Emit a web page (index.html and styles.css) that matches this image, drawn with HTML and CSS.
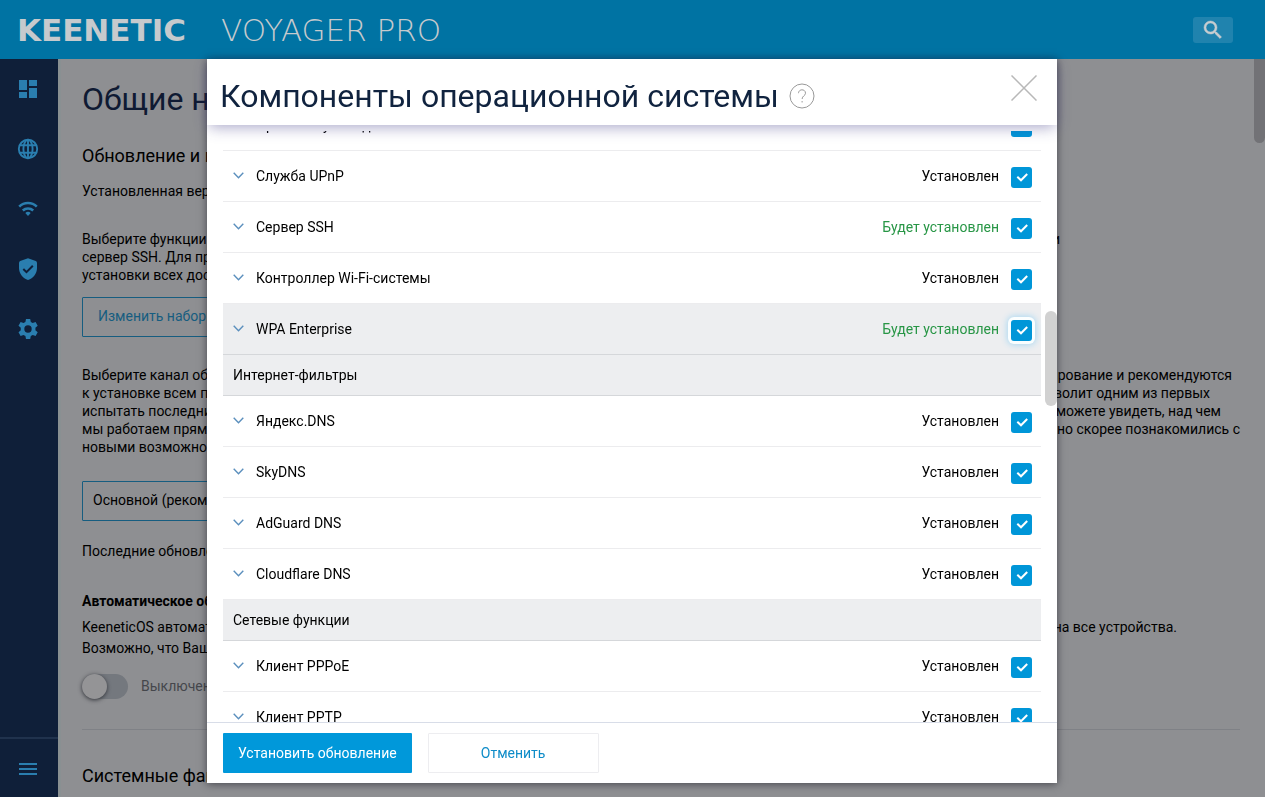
FILE: index.html
```html
<!DOCTYPE html>
<html lang="ru">
<head>
<meta charset="utf-8">
<meta name="viewport" content="width=device-width, initial-scale=1">
<title>Keenetic Voyager Pro</title>
<link rel="stylesheet" href="styles.css">
</head>
<body>
<div class="app">
  <header class="topbar">
    <a class="logo" href="#"><span class="logo-brand">KEENETIC</span><span class="logo-model">VOYAGER PRO</span></a>
    <button class="search" type="button" aria-label="Поиск">
      <svg width="24" height="24" viewBox="0 0 24 24"><path fill="currentColor" stroke="currentColor" stroke-width=".5" d="M15.500 14h-.79l-.28-.27A6.471 6.471 0 0 0 16 9.500 6.500 6.500 0 1 0 9.500 16c1.610 0 3.090-.59 4.230-1.570l.27.28v.79l5 4.990L20.490 19l-4.990-5zm-6 0C7.010 14 5 11.990 5 9.500S7.010 5 9.500 5 14 7.010 14 9.500 11.990 14 9.500 14z"/></svg>
    </button>
  </header>

  <nav class="sidebar">
    <a href="#" aria-label="Системный монитор"><svg width="24" height="24" viewBox="0 0 24 24"><path fill="currentColor" d="M3 13h8V3H3v10zm0 8h8v-6H3v6zm10 0h8V11h-8v10zm0-18v6h8V3h-8z"/></svg></a>
    <a href="#" aria-label="Интернет"><svg width="24" height="24" viewBox="0 0 24 24" fill="none" stroke="currentColor" stroke-width="1.900"><circle cx="12" cy="12" r="9.200"/><ellipse cx="12" cy="12" rx="4.600" ry="9.200"/><path d="M12 2.800v18.400M3.700 8.300h16.600M3.700 15.700h16.600"/></svg></a>
    <a href="#" aria-label="Мои сети и Wi-Fi"><svg width="24" height="24" viewBox="0 0 24 24"><g fill="none" stroke="currentColor" stroke-width="2.600"><path d="M3.200 9.600a12.700 12.700 0 0 1 17.600 0"/><path d="M6.800 13.500a7.700 7.700 0 0 1 10.400 0"/></g><path fill="currentColor" d="M9.300 16a4 4 0 0 1 5.400 0L12 18.900z"/></svg></a>
    <a href="#" aria-label="Сетевые правила"><svg width="24" height="24" viewBox="0 0 24 24"><path fill="currentColor" d="M12 1.200 4.200 4Q3 4.500 3 5.800V11c0 5.500 3.800 10.400 9 12 5.200-1.600 9-6.500 9-12V5.800Q21 4.500 19.800 4z"/><path d="m7.300 12 3.200 3.200 6.300-6.400" fill="none" stroke="#0f1f39" stroke-width="2"/></svg></a>
    <a href="#" aria-label="Управление"><svg width="24" height="24" viewBox="0 0 24 24"><path fill="currentColor" fill-rule="evenodd" d="M12 8.300a3.700 3.700 0 1 1 0 7.400 3.700 3.700 0 0 1 0-7.400m-2-6.300-.6 3-1.900 1.100-2.900-1-2.100 3.700 2.300 2a8 8 0 0 0 0 2.400l-2.300 2 2.100 3.700 2.900-1 1.900 1.100.6 3h4.200l.6-3 1.900-1.100 2.900 1 2.100-3.700-2.300-2a8 8 0 0 0 0-2.400l2.300-2-2.100-3.700-2.900 1-1.900-1.100-.6-3z"/></svg></a>
    <button class="menu" type="button" aria-label="Меню"><svg width="18" height="12" viewBox="0 0 18 12"><path fill="currentColor" d="M0 0h18v2H0zM0 5h18v2H0zM0 10h18v2H0z"/></svg></button>
  </nav>

  <main class="page">
    <h1>Общие настройки</h1>
    <h2>Обновление и компоненты</h2>
    <p class="version">Установленная версия</p>
    <div class="text intro">
      <p class="line end-narrow"><span>Выберите функции</span><span>и</span></p>
      <p class="line"><span>сервер SSH. Для применения</span></p>
      <p class="line"><span>установки всех доступных</span></p>
    </div>
    <button class="outline" type="button">Изменить набор компонентов</button>
    <div class="text channel">
      <p class="line end-s"><span>Выберите канал обновлений</span><span>тестирование и рекомендуются</span></p>
      <p class="line end-l"><span>к установке всем пользователям</span><span>позволит одним из первых</span></p>
      <p class="line end-m"><span>испытать последние</span><span>можете увидеть, над чем</span></p>
      <p class="line"><span>мы работаем прямо сейчас</span><span>можно скорее познакомились с</span></p>
      <p class="line"><span>новыми возможностями</span></p>
    </div>
    <select class="select" aria-label="Канал обновлений"><option>Основной (рекомендуется)</option></select>
    <p class="last">Последние обновления</p>
    <h3>Автоматическое обновление</h3>
    <div class="text auto">
      <p class="line end-xl"><span>KeeneticOS автоматически</span><span>на все устройства.</span></p>
      <p class="line"><span>Возможно, что Ваше</span></p>
    </div>
    <label class="toggle"><input type="checkbox" role="switch"><span>Выключено</span></label>
    <hr>
    <h2 class="files">Системные файлы</h2>
    <div class="page-thumb"></div>
  </main>
</div>

<div class="backdrop">
  <section class="modal" role="dialog" aria-labelledby="dialog-title">
    <header class="modal-head">
      <h2 id="dialog-title">Компоненты операционной системы</h2>
      <button class="help" type="button" aria-label="Справка"><svg width="26" height="26" viewBox="0 0 26 26" fill="none" stroke="currentColor"><circle cx="13" cy="13" r="12"/><path d="M9.500 10.200c.1-4.600 7.200-4.400 7 .1-.1 2.400-3.400 2.700-3.400 5.700M13.100 18v1.500"/></svg></button>
      <button class="close" type="button" aria-label="Закрыть"><svg width="26" height="26" viewBox="0 0 26 26" fill="none" stroke="currentColor" stroke-width="1.500"><path d="m.5.5 25 25M25.500.5l-25 25"/></svg></button>
    </header>
    <div class="scroller">
      <div class="list" id="list"></div>
      <div class="modal-thumb"></div>
    </div>
    <footer class="modal-foot">
      <button class="primary" type="button">Установить обновление</button>
      <button class="cancel" type="button">Отменить</button>
    </footer>
  </section>
</div>
<script src="app.js"></script>
</body>
</html>
```
FILE: styles.css
```css
* { box-sizing: border-box; }
body, h1, h2, h3, p { margin: 0; }
body { font: 14px/18px Roboto, sans-serif; color: #000; overflow: hidden; }
button, input, select { font: inherit; margin: 0; }
button { padding: 0; border: 0; background: none; cursor: pointer; }
svg { display: block; }

.app {
  display: grid;
  grid-template: auto 1fr / 58px 1fr;
  height: 100vh;
  overflow: hidden;
}
.topbar {
  grid-column: 1 / -1;
  display: flex;
  align-items: center;
  justify-content: space-between;
  height: 59px;
  padding: 0 32px 0 17px;
  background: #0073a3;
}
.logo {
  display: flex;
  color: #c6cacd;
  font: 31px/32px "DejaVu Sans", sans-serif;
  text-decoration: none;
}
.logo-brand { min-width: 204px; font-weight: 700; }
.logo-model { font-weight: 200; }
.search {
  display: grid;
  place-items: center;
  width: 40px;
  height: 26px;
  border-radius: 3px;
  background: #2083ae;
  color: #c8cdd0;
}

.sidebar {
  display: flex;
  flex-direction: column;
  background: #0f1f39;
  color: #2a7eaf;
}
.sidebar a {
  display: grid;
  place-items: center;
  height: 60px;
  padding-right: 2px;
  color: inherit;
}
.menu {
  display: grid;
  place-items: center;
  height: 60px;
  margin-top: auto;
  padding: 2px 2px 0 0;
  border-top: 2px solid #20324d;
  color: #2a7eaf;
}

.page {
  position: relative;
  display: flex;
  flex-direction: column;
  min-width: 0;
  padding: 20px 25px 0 21px;
  border-left: 3px solid #899092;
  background: #8e8f92;
  overflow: hidden;
  white-space: nowrap;
}
.page > * { flex: none; }
h1 { font-size: 32px; line-height: 40px; font-weight: 400; color: #0f1a33; }
.page h2 { margin-top: 25px; font-size: 18px; line-height: 24px; font-weight: 400; }
.version { margin-top: 14px; }
.intro { margin-top: 30px; }
.line { display: flex; justify-content: space-between; }
.end-s { padding-right: 8px; }
.end-m { padding-right: 19px; }
.end-l { padding-right: 30px; }
.end-xl { padding-right: 63px; }
.end-narrow { padding-right: 180px; }
.outline, .select {
  align-self: flex-start;
  width: 260px;
  height: 40px;
  border: 1px solid #165d80;
  border-radius: 1px;
}
.outline { margin-top: 13px; padding: 0 0 2px 15px; color: #165d80; text-align: left; }
.channel { margin-top: 29px; }
.select { margin-top: 25px; padding: 0 0 2px 10px; background: none; color: #000; appearance: none; }
.last { margin-top: 21px; }
h3 { margin-top: 32px; font-size: 14px; font-weight: 700; }
.auto { margin-top: 7px; line-height: 21px; }
.toggle {
  display: flex;
  align-items: center;
  gap: 13px;
  height: 26px;
  margin-top: 14px;
  color: #45474c;
}
.toggle input {
  display: flex;
  width: 46px;
  height: 25px;
  border-radius: 13px;
  background: #74787e;
  appearance: none;
}
.toggle input::before {
  content: "";
  width: 25px;
  height: 25px;
  border-radius: 50%;
  background: #949496;
  box-shadow: 0 1px 4px #303238;
}
hr { width: 100%; margin: 30px 0 0; border: 0; border-top: 1px solid #7f8186; }
.page .files { margin-top: 34px; }
.page-thumb {
  position: absolute;
  top: 0;
  right: 0;
  width: 11px;
  height: 84px;
  border-radius: 0 0 6px 6px;
  background: #727276;
}

.backdrop {
  position: fixed;
  inset: 59px 1px 0 0;
  display: flex;
  justify-content: center;
  align-items: flex-start;
}
.modal {
  display: flex;
  flex-direction: column;
  width: 850px;
  max-width: 100%;
  height: calc(100% - 14px);
  background: #fff;
  box-shadow: 0 1px 8px rgba(20, 20, 30, .6);
}
.modal-head {
  position: relative;
  z-index: 1;
  display: flex;
  align-items: center;
  height: 66px;
  margin-bottom: 6px;
  padding: 8px 20px 0 13px;
  background: #fff;
  box-shadow: 0 4px 14px -2px rgba(60, 55, 130, .45);
}
.modal-head h2 { font-size: 32px; line-height: 40px; font-weight: 400; color: #10233f; }
.help { margin-left: 10px; color: #999; }
.close { margin: 0 0 16px auto; color: #b8b8b8; }
.scroller { position: relative; flex: 1; min-height: 0; overflow: hidden; padding: 0 16px; }
.list { margin-top: -31px; }
.row {
  display: flex;
  align-items: center;
  gap: 12px;
  height: 51px;
  padding: 0 9px 0 10px;
  border-bottom: 1px solid #ececee;
}
.row.active { background: #edeef0; border-color: #d5d7da; }
.chevron { margin-bottom: 2px; color: #5b8fbd; }
.name { flex: 1; }
.pending { color: #289646; }
.row input {
  width: 21px;
  height: 21px;
  margin-top: 3px;
  border-radius: 3px;
  background: #0096d8 url("data:image/svg+xml,%3Csvg xmlns='http://www.w3.org/2000/svg' viewBox='0 0 21 21'%3E%3Cpath d='m6.300 9.700 3.700 3.600 6.200-6.300' fill='none' stroke='white' stroke-width='2'/%3E%3C/svg%3E");
  appearance: none;
}
.row.active input { box-shadow: 0 0 0 3px #fafeff, 0 0 6px 4px #acd9f2; }
.group {
  height: 41px;
  padding: 0 10px;
  border-bottom: 1px solid #d5d7da;
  background: #edeef0;
  font-size: 14px;
  font-weight: 400;
  line-height: 40px;
  margin: 0;
}
.modal-thumb {
  position: absolute;
  top: 180px;
  right: 0;
  width: 12px;
  height: 95px;
  border-radius: 6px;
  background: #d1d1d1;
}
.modal-foot {
  display: flex;
  gap: 16px;
  padding: 10px 16px;
  border-top: 1px solid #d8dde8;
}
.modal-foot button { height: 40px; border-radius: 1px; }
.primary { padding: 0 15px; background: #0098da; color: #fff; }
.cancel { width: 171px; border: 1px solid #ededf0; color: #0e8cc8; }
```
FILE: app.js
```js
const groups = [
  { rows: [['Протокол учёта данных'], ['Служба UPnP'], ['Сервер SSH', 'pending'], ['Контроллер Wi-Fi-системы'], ['WPA Enterprise', 'pending', 'active']] },
  { title: 'Интернет-фильтры', rows: [['Яндекс.DNS'], ['SkyDNS'], ['AdGuard DNS'], ['Cloudflare DNS']] },
  { title: 'Сетевые функции', rows: [['Клиент PPPoE'], ['Клиент PPTP']] }
];

const chevron = '<svg class="chevron" width="11" height="7" viewBox="0 0 11 7" fill="none" stroke="currentColor" stroke-width="1.400"><path d="m.7.7 4.800 5 4.800-5"/></svg>';

document.getElementById('list').innerHTML = groups.map(group =>
  (group.title ? `<h3 class="group">${group.title}</h3>` : '') +
  group.rows.map(([name, status = '', state = '']) =>
    `<label class="row ${state}">${chevron}<span class="name">${name}</span>` +
    `<span class="${status}">${status ? 'Будет установлен' : 'Установлен'}</span>` +
    '<input type="checkbox" checked></label>').join('')
).join('');
```
